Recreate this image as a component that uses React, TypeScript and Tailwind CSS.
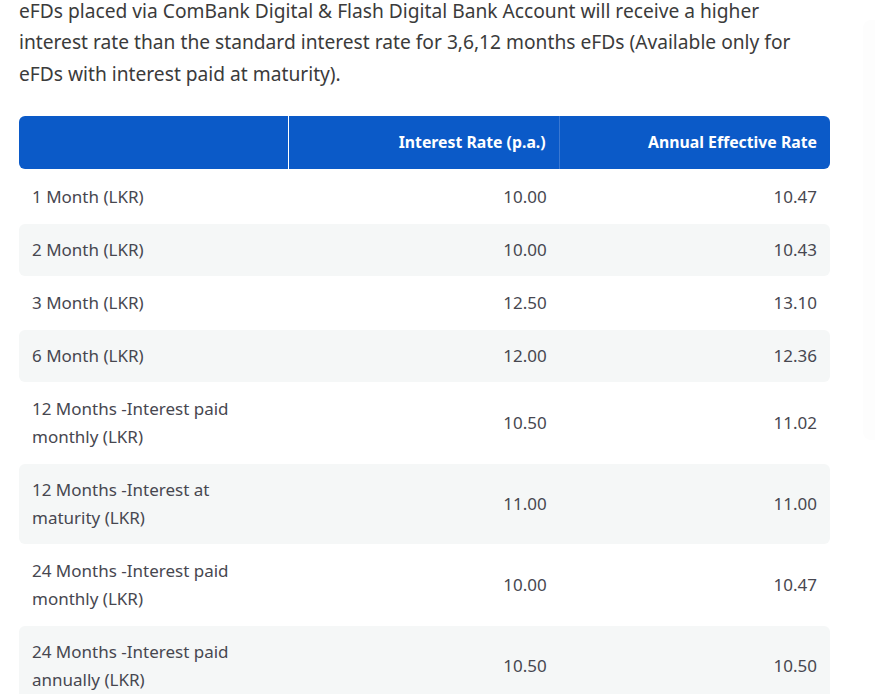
const rows: { label: string[]; rate: string; aer: string }[] = [
  { label: ['1 Month (LKR)'], rate: '10.00', aer: '10.47' },
  { label: ['2 Month (LKR)'], rate: '10.00', aer: '10.43' },
  { label: ['3 Month (LKR)'], rate: '12.50', aer: '13.10' },
  { label: ['6 Month (LKR)'], rate: '12.00', aer: '12.36' },
  { label: ['12 Months -Interest paid', 'monthly (LKR)'], rate: '10.50', aer: '11.02' },
  { label: ['12 Months -Interest at', 'maturity (LKR)'], rate: '11.00', aer: '11.00' },
  { label: ['24 Months -Interest paid', 'monthly (LKR)'], rate: '10.00', aer: '10.47' },
  { label: ['24 Months -Interest paid', 'annually (LKR)'], rate: '10.50', aer: '10.50' },
];

export default function App() {
  return (
    <div
      className="relative w-[875px] h-[694px] overflow-hidden bg-white"
      style={{ fontFamily: '"Noto Sans", "Open Sans", sans-serif' }}
    >
      {/* faint side panel on the right */}
      <div className="absolute left-[863px] top-[20px] w-[20px] h-[420px] rounded-l-lg bg-[#fdfdfd]" />

      <div className="pl-[19px] pr-[40px] pt-[1px]">
        <p className="text-[19.2px] text-[#3b3b3b] whitespace-nowrap">
          <span className="block leading-[20px]">
            eFDs placed via ComBank Digital &amp; Flash Digital Bank Account will receive a higher
          </span>
          <span className="block leading-[32px] mt-[5px]">
            interest rate than the standard interest rate for 3,6,12 months eFDs (Available only for
            <br />
            eFDs with interest paid at maturity).
          </span>
        </p>

        <div className="mt-[26px] w-[811px]">
          {/* header */}
          <div className="grid grid-cols-3 h-[53px] rounded-md bg-[#0b5ac8] text-white font-bold text-[15.8px]">
            <div className="border-r border-white" />
            <div className="flex items-center justify-end px-[13px] border-r border-[#3a78d2]">
              Interest Rate (p.a.)
            </div>
            <div className="flex items-center justify-end px-[13px]">Annual Effective Rate</div>
          </div>

          {/* body */}
          <div className="flex flex-col gap-[1px] mt-[2px]">
            {rows.map((r, i) => (
              <div
                key={i}
                className={`grid grid-cols-3 items-center rounded-md py-[12px] text-[17px] leading-[28px] text-[#474750] ${
                  i % 2 === 1 ? 'bg-[#f5f7f7]' : 'bg-white'
                }`}
              >
                <div className="px-[13px] whitespace-nowrap">
                  {r.label.map((l, j) => (
                    <div key={j}>{l}</div>
                  ))}
                </div>
                <div className="px-[13px] text-right">{r.rate}</div>
                <div className="px-[13px] text-right">{r.aer}</div>
              </div>
            ))}
          </div>
        </div>
      </div>
    </div>
  );
}
